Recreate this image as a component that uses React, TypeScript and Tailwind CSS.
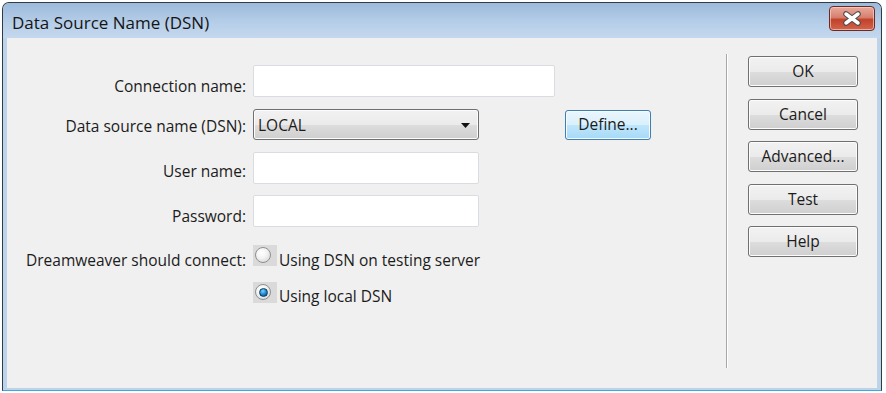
import React from "react";

const FONT = { fontFamily: '"Open Sans", "Noto Sans", "Liberation Sans", sans-serif' };

function WinButton({ label, className = "" }: { label: string; className?: string }) {
  return (
    <div
      className={`flex h-[31px] w-[110px] items-center justify-center rounded-[3px] border border-[#707070] bg-[linear-gradient(to_bottom,#f2f2f2_0%,#ebebeb_50%,#dddddd_51%,#cfcfcf_100%)] pt-[1px] text-[15.5px] text-[#1b1b1b] shadow-[inset_0_0_0_1px_#fcfcfc] ${className}`}
    >
      {label}
    </div>
  );
}

function TextBox({ width }: { width: string }) {
  return <div className={`h-[32px] ${width} rounded-[2px] border border-[#d9dde2] bg-white`} />;
}

function Radio({ checked }: { checked?: boolean }) {
  return (
    <div className="flex h-[21px] w-[24px] items-start justify-start bg-[#dadada] pl-[2px] pt-[2px]">
      <div className="flex h-[16px] w-[16px] items-center justify-center rounded-full border border-[#8e8f8f] bg-[radial-gradient(circle_at_40%_35%,#ffffff_0%,#f4f4f4_40%,#cfcfcf_100%)]">
        {checked && (
          <div className="h-[9px] w-[9px] rounded-full border border-[#0c3d5e] bg-[radial-gradient(circle_at_40%_30%,#7fd3ff_0%,#1c8ad2_50%,#07406e_100%)]" />
        )}
      </div>
    </div>
  );
}

export default function App() {
  return (
    <div className="h-[393px] w-[886px] overflow-hidden bg-white pt-[2px]" style={FONT}>
      <div className="ml-[2px] flex h-[389px] w-[880px] flex-col overflow-hidden rounded-t-[7px] border border-[#2f3b47] border-b-[#38ace0] bg-[#bdd3ea]">
        {/* Title bar */}
        <div className="flex h-[35px] items-center bg-[linear-gradient(to_bottom,#9dbadb,#b7cfe9_60%,#c4d8ee)] pl-[9px]">
          <span className="pt-[4px] text-[17px] text-[#151515]">Data Source Name (DSN)</span>
          <div className="ml-auto mr-[6px] mt-[-5px] flex h-[25px] w-[46px] items-center justify-center rounded-[4px] border border-[#6a2b22] bg-[linear-gradient(to_bottom,#e8a99c_0%,#d6806f_45%,#c2412b_55%,#d2654b_100%)] shadow-[inset_0_0_0_1px_rgba(255,220,210,0.6)]">
            <svg width="20" height="15" viewBox="0 0 20 15">
              <path d="M4 3 L16 12 M16 3 L4 12" stroke="#4a4a4a" strokeWidth="5.5" strokeLinecap="round" />
              <path d="M4 3 L16 12 M16 3 L4 12" stroke="#ffffff" strokeWidth="3.5" strokeLinecap="round" />
            </svg>
          </div>
        </div>

        {/* Client area */}
        <div className="mx-[4px] mb-[2px] flex flex-1 bg-[#f0f0f0] text-[15.5px] text-[#1b1b1b]">
          {/* Form */}
          <div className="flex w-[719px] flex-col pt-[27px]">
            <div className="flex h-[32px] items-center gap-[7px]">
              <div className="w-[239px] pt-[11px] text-right">Connection name:</div>
              <TextBox width="w-[302px]" />
            </div>
            <div className="mt-[12px] flex h-[31px] items-center gap-[7px]">
              <div className="w-[239px] pt-[5px] text-right">Data source name (DSN):</div>
              <div className="flex h-[31px] w-[226px] items-center rounded-[3px] border border-[#707070] bg-[linear-gradient(to_bottom,#f2f2f2_0%,#ebebeb_50%,#dddddd_51%,#cfcfcf_100%)] pl-[4px] pr-[8px] pt-[2px] shadow-[inset_0_0_0_1px_#fcfcfc]">
                <span>LOCAL</span>
                <svg className="ml-auto" width="9" height="5" viewBox="0 0 9 5">
                  <path d="M0 0 H9 L4.5 5 Z" fill="#111" />
                </svg>
              </div>
              <div className="ml-[79px] flex h-[30px] w-[86px] items-center justify-center rounded-[3px] border border-[#3c7fb1] bg-[linear-gradient(to_bottom,#eaf6fd_0%,#d9f0fc_50%,#bee6fd_51%,#a7d9f5_100%)] pt-[1px] shadow-[inset_0_0_0_1px_#f5fbfe]">
                Define...
              </div>
            </div>
            <div className="mt-[12px] flex h-[31px] items-center gap-[7px]">
              <div className="w-[239px] pt-[9px] text-right">User name:</div>
              <TextBox width="w-[226px]" />
            </div>
            <div className="mt-[12px] flex h-[32px] items-center gap-[7px]">
              <div className="w-[239px] pt-[12px] text-right">Password:</div>
              <TextBox width="w-[226px]" />
            </div>
            <div className="mt-[18px] flex items-start gap-[7px]">
              <div className="w-[239px] pt-[4px] text-right leading-[22px]">Dreamweaver should connect:</div>
              <div className="flex items-start gap-[2px]">
                <Radio />
                <span className="pt-[4px] leading-[22px]">Using DSN on testing server</span>
              </div>
            </div>
            <div className="mt-[11px] flex items-start gap-[7px]">
              <div className="w-[239px]" />
              <div className="flex items-start gap-[2px]">
                <Radio checked />
                <span className="pt-[3px] leading-[22px]">Using local DSN</span>
              </div>
            </div>
          </div>

          {/* Separator */}
          <div className="mt-[16px] h-[314px] w-[2px] border-l border-r border-l-[#a8a8a8] border-r-[#ffffff]" />

          {/* Buttons */}
          <div className="ml-[20px] mt-[18px] flex flex-col gap-[11.5px]">
            <WinButton label="OK" />
            <WinButton label="Cancel" />
            <WinButton label="Advanced..." />
            <WinButton label="Test" />
            <WinButton label="Help" />
          </div>
        </div>
      </div>
    </div>
  );
}
